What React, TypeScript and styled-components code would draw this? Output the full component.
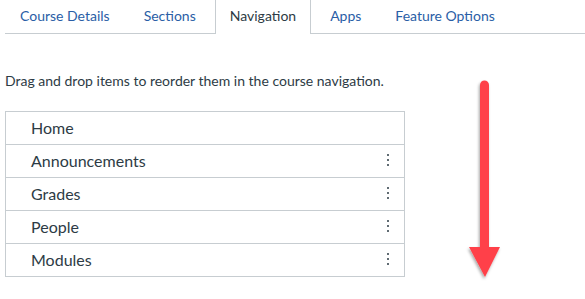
import styled, { createGlobalStyle } from "styled-components";

const GlobalStyle = createGlobalStyle`
  body {
    margin: 0;
    background: #ffffff;
    font-family: Lato, "Open Sans", sans-serif;
    color: #2d3b45;
  }
`;

const tabs = ["Course Details", "Sections", "Navigation", "Apps", "Feature Options"];
const navItems = [
  { label: "Home", menu: false },
  { label: "Announcements", menu: true },
  { label: "Grades", menu: true },
  { label: "People", menu: true },
  { label: "Modules", menu: true },
];

const App = () => {
  return (
    <Page>
      <GlobalStyle />
      <TabBar>
        {tabs.map((t) => (
          <Tab key={t} $active={t === "Navigation"}>
            {t}
          </Tab>
        ))}
      </TabBar>
      <Intro>Drag and drop items to reorder them in the course navigation.</Intro>
      <NavList>
        {navItems.map((item) => (
          <NavRow key={item.label}>
            <span>{item.label}</span>
            {item.menu && (
              <Kebab>
                <i />
                <i />
                <i />
              </Kebab>
            )}
          </NavRow>
        ))}
      </NavList>
      <Arrow width="40" height="210" viewBox="0 0 40 210">
        <defs>
          <filter id="shadow" x="-50%" y="-20%" width="200%" height="140%">
            <feDropShadow dx="-1" dy="2" stdDeviation="1.5" floodColor="#000" floodOpacity="0.35" />
          </filter>
        </defs>
        <g filter="url(#shadow)">
          <line x1="19.5" y1="10" x2="19.5" y2="175" stroke="#ff4149" strokeWidth="9" strokeLinecap="round" />
          <polygon points="4,172 35,172 20,202" fill="#ff4149" />
        </g>
      </Arrow>
    </Page>
  );
};

export default App;

const Page = styled.div`
  position: relative;
  width: 585px;
  height: 299px;
  overflow: hidden;
`;

const TabBar = styled.ul`
  display: flex;
  align-items: flex-start;
  gap: 4px;
  margin: 0 0 0 5px;
  padding: 0;
  list-style: none;
  border-bottom: 1px solid #c7cdd1;
  height: 33px;
`;

const Tab = styled.li<{ $active: boolean }>`
  box-sizing: border-box;
  height: ${(p) => (p.$active ? "34px" : "33px")};
  padding: 0 14px 3px;
  display: flex;
  align-items: center;
  font-size: 14px;
  border: 1px solid ${(p) => (p.$active ? "#c7cdd1" : "transparent")};
  border-top: none;
  border-bottom: none;
  background: #fff;
  color: ${(p) => (p.$active ? "#2d3b45" : "#2a5ea6")};
`;

const Intro = styled.p`
  margin: 38px 0 0 5px;
  font-size: 14px;
  line-height: 17px;
`;

const NavList = styled.ul`
  margin: 22px 0 0 5px;
  padding: 0;
  list-style: none;
  width: 400px;
  box-sizing: border-box;
  border: 1px solid #c7cdd1;
`;

const NavRow = styled.li`
  box-sizing: border-box;
  height: 32px;
  display: flex;
  align-items: center;
  justify-content: space-between;
  padding: 0 15px 2px 25px;
  font-size: 16px;
  & + & {
    height: 33px;
    border-top: 1px solid #c7cdd1;
  }
`;

const Kebab = styled.span`
  display: flex;
  flex-direction: column;
  gap: 3px;
  i {
    display: block;
    width: 2px;
    height: 2px;
    border-radius: 1px;
    background: #2d3b45;
  }
`;

const Arrow = styled.svg`
  position: absolute;
  left: 465px;
  top: 75px;
`;
